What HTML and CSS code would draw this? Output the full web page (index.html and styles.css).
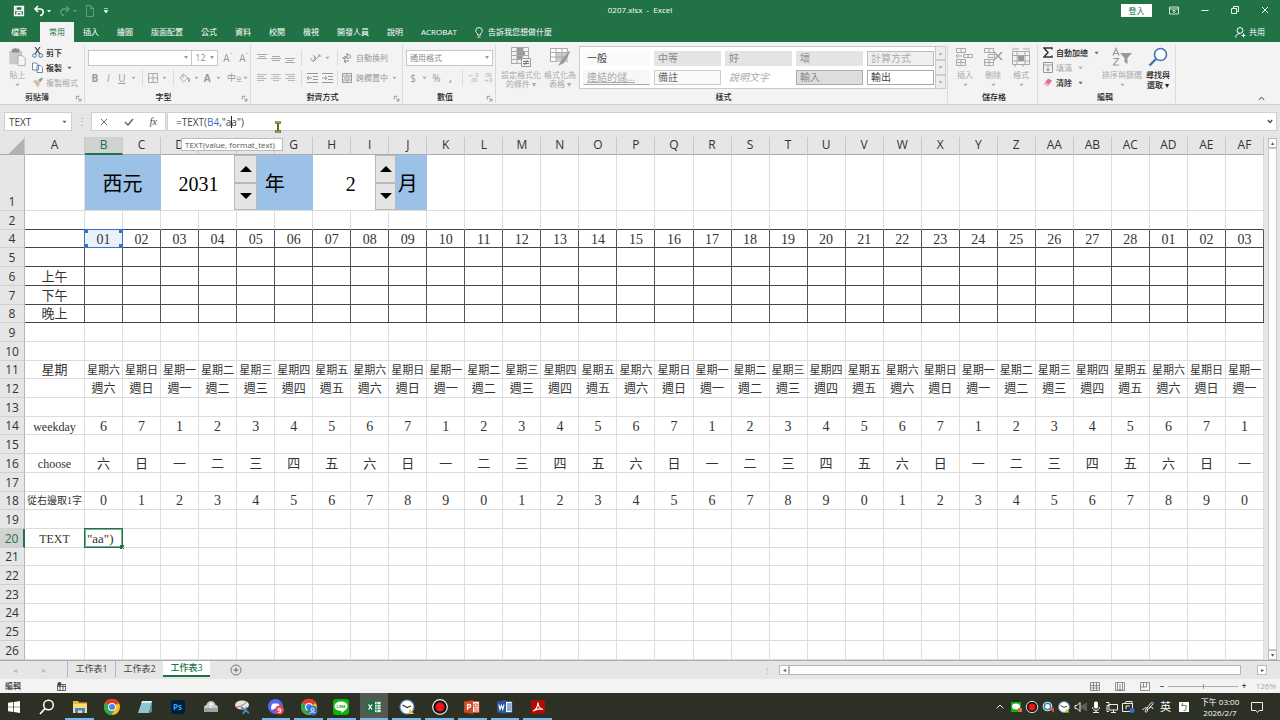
FILE: index.html
```html
<!DOCTYPE html>
<html lang="zh-Hant">
<head>
<meta charset="utf-8">
<title>0207.xlsx - Excel</title>
<link rel="stylesheet" href="styles.css">
</head>
<body>
<svg class="sprite" aria-hidden="true">
  <symbol id="caret" viewBox="0 0 6 4"><path d="M0.5 0.5h5L3 3.5z" fill="currentColor"/></symbol>
  <symbol id="launcher" viewBox="0 0 8 8"><path d="M1.500 5V1.500H5M3.500 3.500l3 3M6.800 4v2.800H4" fill="none" stroke="currentColor"/></symbol>
  <symbol id="chrome" viewBox="0 0 18 18"><circle cx="9" cy="9" r="8" fill="#fbc116"/><path d="M9 9 2 5A8 8 0 0 1 16 5z" fill="#e33b2e"/><path d="M9 9 2 5a8 8 0 0 0 6.500 12L12.500 11z" fill="#2da94f"/><circle cx="9" cy="9" r="4" fill="#fff"/><circle cx="9" cy="9" r="3" fill="#4285f4"/></symbol>
  <symbol id="record" viewBox="0 0 18 18"><circle cx="9" cy="9" r="7.300" fill="#111" stroke="#eee" stroke-width="1.200"/><circle cx="9" cy="9" r="4.500" fill="#f01414"/></symbol>
  <symbol id="clock" viewBox="0 0 18 18"><circle cx="9" cy="9" r="7" fill="#fff" stroke="#6b8fc0" stroke-width="1.200"/><path d="M4.500 7 9 9.500 13 8" fill="none" stroke="#333" stroke-width="1.200"/><path d="M12 11l4 5h-6z" fill="#e8c34a"/></symbol>
</svg>

<header class="titlebar">
  <div class="quick">
    <button aria-label="儲存"><svg width="12" height="12" viewBox="0 0 12 12"><path d="M1.500 1.500h9v9h-9zM3 1.500v4h6v-4M4 10.500v-3h4v3" fill="none" stroke="#fff" stroke-width="1.300"/></svg></button>
    <button aria-label="復原"><svg width="18" height="12" viewBox="0 0 18 12"><path d="M5 1 2 4l3 3M2 4h5a3.200 3.200 0 0 1 0 6.500" fill="none" stroke="#fff" stroke-width="1.600"/><path d="M14 5h4l-2 2.500z" fill="#fff"/></svg></button>
    <button aria-label="重做" class="dim"><svg width="18" height="12" viewBox="0 0 18 12"><path d="M7 1l3 3-3 3M10 4H5a3.200 3.200 0 0 0 0 6.500" fill="none" stroke="#fff" stroke-width="1.300"/><path d="M14 5h4l-2 2.500z" fill="#fff"/></svg></button>
    <button aria-label="新增" class="dim"><svg width="10" height="12" viewBox="0 0 10 12"><path d="M1.500 .5h4l3 3v8h-7zM5.500 .5v3h3" fill="none" stroke="#fff"/></svg></button>
    <button aria-label="自訂快速存取工具列"><svg width="6" height="6" viewBox="0 0 6 6"><path d="M1 0.500h4M1 2.500h4L3 5z" fill="#fff" stroke="#fff" stroke-width=".6"/></svg></button>
  </div>
  <h1 class="doc-title">0207.xlsx &nbsp;- &nbsp;Excel</h1>
  <div class="window-tools">
    <button class="signin">登入</button>
    <button aria-label="功能區顯示選項"><svg width="10" height="9" viewBox="0 0 10 9"><path d="M.5 1h9v7h-9zM.5 3h9M5 7V4M3.500 5.500 5 4l1.500 1.500" fill="none" stroke="#fff" stroke-width=".8"/></svg></button>
    <button aria-label="最小化"><svg width="8" height="8" viewBox="0 0 8 8"><path d="M.5 4.500h7" stroke="#fff"/></svg></button>
    <button aria-label="還原"><svg width="8" height="8" viewBox="0 0 8 8"><path d="M.5 2.500h5v5h-5zM2.500 2V.5h5v5H6" fill="none" stroke="#fff" stroke-width=".9"/></svg></button>
    <button aria-label="關閉"><svg width="8" height="8" viewBox="0 0 8 8"><path d="M1 1l6 6M7 1 1 7" stroke="#fff"/></svg></button>
  </div>
</header>

<nav class="ribbon-tabs">
  <button class="file">檔案</button><button class="active">常用</button><button>插入</button><button>繪圖</button><button>版面配置</button><button>公式</button><button>資料</button><button>校閱</button><button>檢視</button><button>開發人員</button><button>說明</button><button>ACROBAT</button>
  <button class="tell"><svg width="8" height="11" viewBox="0 0 8 11"><path d="M2.500 8V6.500C1 5.500.7 4.500.7 3.800a3.300 3.300 0 0 1 6.600 0c0 .7-.3 1.700-1.800 2.700V8zM2.500 10h3" fill="none" stroke="#fff" stroke-width=".9"/></svg>告訴我您想做什麼</button>
  <button class="share"><svg width="11" height="11" viewBox="0 0 11 11"><circle cx="5" cy="3.500" r="2.900" fill="none" stroke="#fff"/><path d="M.7 10.500c0-2.500 2-4 4.300-4M8.500 6.500v4M6.500 8.500h4" fill="none" stroke="#fff"/></svg>共用</button>
</nav>

<section class="ribbon" aria-label="常用">
  <div class="group g-clip">
    <div class="tools">
      <button class="big dim"><svg width="19" height="20" viewBox="0 0 20 22"><path d="M1 4h14v15H1z" fill="#c9c9c9"/><path d="M4 2h3l1-1.500L9 2h3v4H4z" fill="#8d8d8d"/><path d="M10.500 9.500h5l3 3v8h-8z" fill="#f5f5f5" stroke="#aaa"/></svg><span>貼上</span><svg class="caret"><use href="#caret"/></svg></button>
      <div class="stack">
        <button><svg width="12" height="11" viewBox="0 0 12 11"><path d="M3 0l5 7M8 0 3 7" stroke="#444" stroke-width="1.200"/><circle cx="2.500" cy="8.500" r="1.800" fill="none" stroke="#4a78a8"/><circle cx="8.800" cy="8.500" r="1.800" fill="none" stroke="#4a78a8"/></svg>剪下</button>
        <button><svg width="12" height="11" viewBox="0 0 12 11"><path d="M.5 1h4l2 2v5h-6zM5 3.500h3.500l2 2v5H5z" fill="#fff" stroke="#6c8aa8"/></svg>複製<svg class="caret"><use href="#caret"/></svg></button>
        <button class="dim"><svg width="12" height="11" viewBox="0 0 12 11"><path d="M6 3 9.500.5 11 2 8 5.500z" fill="#999"/><path d="M1 4l3-1 4 3-2 4.500z" fill="#d9b99b"/></svg>複製格式</button>
      </div>
    </div>
    <footer>剪貼簿<svg class="launcher"><use href="#launcher"/></svg></footer>
  </div>

  <div class="group g-font">
    <div class="lines">
      <div class="line">
        <select class="face" aria-label="字型"><option></option></select><select class="size" aria-label="字型大小"><option>12</option></select>
        <button class="grow" aria-label="放大字型">A<sup>ˆ</sup></button><button class="grow" aria-label="縮小字型">A<sup>ˇ</sup></button>
      </div>
      <div class="line letters">
        <button><b>B</b></button><button><i>I</i></button><button><u>U</u></button><svg class="caret"><use href="#caret"/></svg><hr>
        <button aria-label="框線"><svg width="10" height="10" viewBox="0 0 10 10"><path d="M.5.5h9v9h-9zM5 0v10M0 5h10" fill="none" stroke="#aaa"/></svg></button><svg class="caret"><use href="#caret"/></svg><hr>
        <button aria-label="填滿色彩"><svg width="11" height="10" viewBox="0 0 11 10"><path d="M4 1 9 5 4.500 9 1 5zM4 1v4" fill="none" stroke="#aaa"/><path d="M10 5v4" stroke="#999" stroke-width="1.500"/></svg></button><svg class="caret"><use href="#caret"/></svg>
        <button><b>A</b></button><svg class="caret"><use href="#caret"/></svg><button class="phon">中<small>ㄓ</small></button><svg class="caret"><use href="#caret"/></svg>
      </div>
    </div>
    <footer>字型<svg class="launcher"><use href="#launcher"/></svg></footer>
  </div>

  <div class="group g-align">
    <div class="lines">
      <div class="line">
        <button aria-label="靠上"><svg width="10" height="10"><path d="M0 1.500h10M2 3.500h6M0 5.500h10" stroke="#aaa"/></svg></button><button aria-label="置中"><svg width="10" height="10"><path d="M1 3.500h8M0 5.500h10M1 7.500h8" stroke="#aaa"/></svg></button><button aria-label="靠下"><svg width="10" height="10"><path d="M0 5.500h10M2 7.500h6M0 9.500h10" stroke="#aaa"/></svg></button><hr>
        <button class="mid" aria-label="方向"><svg width="11" height="10" viewBox="0 0 11 10"><path d="M1 5a2 2 0 1 0 3-1M3 2l4 4M3 9l7-7M8 2h2v2" fill="none" stroke="#999"/></svg><svg class="caret"><use href="#caret"/></svg></button><hr>
        <button class="wide"><svg width="10" height="11" viewBox="0 0 10 11"><path d="M1 4a1.500 1.500 0 1 0 2-1v3M5 0v5a2 2 0 1 0 0-3M2 8h5M4 7 2 8.500 4 10" fill="none" stroke="#888"/></svg>自動換列</button>
      </div>
      <div class="line">
        <button aria-label="靠左"><svg width="10" height="10"><path d="M0 1.500h10M0 3.500h7M0 5.500h10M0 7.500h7" stroke="#bbb"/></svg></button><button aria-label="水平置中"><svg width="10" height="10"><path d="M0 1.500h10M2 3.500h6M0 5.500h10M2 7.500h6" stroke="#bbb"/></svg></button><button aria-label="靠右"><svg width="10" height="10"><path d="M0 1.500h10M3 3.500h7M0 5.500h10M3 7.500h7" stroke="#bbb"/></svg></button><hr>
        <button class="mid" aria-label="縮排"><svg width="26" height="10" viewBox="0 0 26 10"><path d="M0 .5h11M6 3.500h5M6 6.500h5M0 9.500h11M0 5h5M2 3 0 5l2 2M15 .5h11M21 3.500h5M21 6.500h5M15 9.500h11M15 5h5M18 3l2 2-2 2" fill="none" stroke="#999"/></svg></button><hr>
        <button class="wide"><svg width="10" height="10" viewBox="0 0 10 10"><path d="M.5.5h9v9h-9zM0 3h10M0 7h10M5 0v3M5 7v3M2 5h6" fill="none" stroke="#999"/></svg>跨欄置中<svg class="caret"><use href="#caret"/></svg></button>
      </div>
    </div>
    <footer>對齊方式<svg class="launcher"><use href="#launcher"/></svg></footer>
  </div>

  <div class="group g-num">
    <div class="lines">
      <div class="line"><select class="format" aria-label="數值格式"><option>通用格式</option></select></div>
      <div class="line letters"><button>$</button><svg class="caret"><use href="#caret"/></svg><button>%</button><button><b>,</b></button><hr>
      <button class="dec">←.0<br>.00</button><button class="dec">.00<br>→.0</button></div>
    </div>
    <footer>數值<svg class="launcher"><use href="#launcher"/></svg></footer>
  </div>

  <div class="group g-style">
    <div class="tools">
      <button class="big dim"><svg width="20" height="20" viewBox="0 0 20 20"><path d="M.5.500h17v16H.5zM.5 4.500h17M.5 8.500h17M.5 12.500h17M6 0v16M12 0v16" fill="none" stroke="#aaa"/><path d="M6 1h6v3H6zM6 5h8v3H6zM6 9h5v3H6z" fill="#999"/><path d="M10.500 11.500h9v8h-9z" fill="#f5f5f5" stroke="#999"/><path d="M12 14.500h6M12 16.500h6M16.500 13l-3 5" stroke="#777"/></svg><span>設定格式化<br>的條件 ▾</span></button>
      <button class="big dim"><svg width="20" height="20" viewBox="0 0 20 20"><path d="M.5 1.500h17v13H.5z" fill="#fff" stroke="#aaa"/><path d="M6 5h12v10H6z" fill="#ccc"/><path d="M.5 5.500h17M.5 10h17M6 2v13M12 2v13" stroke="#aaa"/><path d="M19 4l-8 10-3 5 6-3 6-11z" fill="#999"/></svg><span>格式化為<br>表格 ▾</span></button>
      <div class="gallery">
        <button class="plain">一般</button><button class="grey">中等</button><button class="grey">好</button><button class="grey">壞</button><button class="box">計算方式</button>
        <button class="link">連結的儲...</button><button class="note">備註</button><button class="ital">說明文字</button><button class="input">輸入</button><button class="output">輸出</button>
      </div>
      <div class="gscroll"><button aria-label="上一列">▴</button><button aria-label="下一列">▾</button><button aria-label="其他">▾</button></div>
    </div>
    <footer>樣式</footer>
  </div>

  <div class="group g-cells">
    <div class="tools">
      <button class="big dim"><svg width="20" height="20" viewBox="0 0 20 20"><path d="M1.500 1.500h9v4h-9zM6 1v4M1.500 12.500h9v6h-9zM6 12v6M1.500 15.500h9M8.500 7.500h9v3h-9zM13 7v3M1 9h6M3.500 7 1 9l2.500 2" fill="none" stroke="#aaa"/></svg><span>插入</span><svg class="caret"><use href="#caret"/></svg></button>
      <button class="big dim"><svg width="20" height="20" viewBox="0 0 20 20"><path d="M1.500 1.500h9v4h-9zM6 1v4M1.500 12.500h9v6h-9zM6 12v6M1.500 15.500h9M5.500 7.500h6v3h-6z" fill="none" stroke="#aaa"/><path d="M11 5l8 8M19 5l-8 8" stroke="#999" stroke-width="1.400"/></svg><span>刪除</span><svg class="caret"><use href="#caret"/></svg></button>
      <button class="big dim"><svg width="20" height="20" viewBox="0 0 20 20"><path d="M1.500 4.500h17v13h-17zM1 8.500h18M1 14h18M6 4v14M14 4v14M2 .5v3M18 .5v3M3 2h5M12 2h5M4 20v-2M12 20v-2" fill="none" stroke="#aaa"/><path d="M7 9h6v5H7z" fill="#999"/></svg><span>格式</span><svg class="caret"><use href="#caret"/></svg></button>
    </div>
    <footer>儲存格</footer>
  </div>

  <div class="group g-edit">
    <div class="tools">
      <div class="stack">
        <button><svg width="10" height="11" viewBox="0 0 10 11"><path d="M9 2.500V1H1l4 4.500L1 10h8V8.500" fill="none" stroke="#333" stroke-width="1.500"/></svg>自動加總<svg class="caret"><use href="#caret"/></svg></button>
        <button class="dim"><svg width="10" height="11" viewBox="0 0 10 11"><path d="M.5.500h9v10h-9zM0 3h10M5 4v5M3 7l2 2 2-2" fill="none" stroke="#999"/></svg>填滿<svg class="caret"><use href="#caret"/></svg></button>
        <button><svg width="10" height="11" viewBox="0 0 10 11"><path d="M5 1.500 9 3.500 5 9 1 7z" fill="#e36c8c"/><path d="M1 7l1.500-2 3.500 2.500L5 9.500z" fill="#f3afc0"/></svg>清除<svg class="caret"><use href="#caret"/></svg></button>
      </div>
      <button class="big dim sort"><svg width="20" height="20" viewBox="0 0 20 20"><path d="M1 8.500 4 1.500l3 7M2 6.500h4M1.500 11.500h5l-5 6.500h5.500" fill="none" stroke="#999" stroke-width="1.200"/><path d="M8 6h12l-4.500 5v6l-3-2v-4z" fill="#999"/></svg><span>排序與篩選</span><svg class="caret"><use href="#caret"/></svg></button>
      <button class="big find"><svg width="20" height="20" viewBox="0 0 20 20"><circle cx="12.500" cy="7.500" r="6" fill="#fff" stroke="#3b76b5" stroke-width="1.600"/><path d="M8 12l-6.500 6.500" stroke="#3b76b5" stroke-width="2.400"/></svg><span>尋找與<br>選取 ▾</span></button>
    </div>
    <footer>編輯</footer>
  </div>
  <button class="collapse" aria-label="摺疊功能區"><svg width="7" height="5"><path d="M.8 4 3.500 1 6.200 4" fill="none" stroke="#444"/></svg></button>
</section>

<section class="formula-bar">
  <label class="namebox"><input aria-label="名稱方塊" value="TEXT"><svg class="caret"><use href="#caret"/></svg></label>
  <span class="grip">⋮</span>
  <div class="fx"><button aria-label="取消"><svg width="8" height="8"><path d="M1 1l6 6M7 1 1 7" stroke="#666"/></svg></button><button aria-label="輸入"><svg width="10" height="8"><path d="M1 4l3 3 5-6" fill="none" stroke="#666" stroke-width="1.500"/></svg></button><button class="fn" aria-label="插入函數">fx</button></div>
  <div class="formula" contenteditable="true" role="textbox" aria-label="資料編輯列">=TEXT(<span class="ref">B4</span>,"a<i class="bar"></i>a")</div>
  <button class="expand" aria-label="展開"><svg width="6" height="5"><path d="M.8 1 3 3.500 5.200 1" fill="none" stroke="#444" stroke-width="1.200"/></svg></button>
  <div class="hint">TEXT(value, format_text)</div>
  <svg class="ibeam" width="8" height="12" viewBox="0 0 8 12"><path d="M1 1.500h6M4 1.500v9M1 10.500h6" stroke="#3a3300" stroke-width="2"/><path d="M1.500 1.500h5M4 2v8M1.500 10.500h5" stroke="#c9b63c" stroke-width=".8"/></svg>
</section>

<main class="sheet-area">
  <table class="sheet" id="sheet"></table>
  <div class="vscroll"><button aria-label="向上捲動">▴</button><div class="vtrack"></div><button aria-label="向下捲動">▾</button></div>
</main>

<nav class="sheet-tabs">
  <div class="arrows"><button aria-label="上一張">◂</button><button aria-label="下一張">▸</button></div>
  <button class="tab">工作表1</button><button class="tab">工作表2</button><button class="tab current">工作表3</button>
  <button class="add" aria-label="新工作表"><svg width="12" height="12"><circle cx="6" cy="6" r="5" fill="none" stroke="#777"/><path d="M3.500 6h5M6 3.500v5" stroke="#666"/></svg></button>
  <span class="grip">⋮</span>
  <div class="hscroll"><button aria-label="向左捲動">◂</button><div class="thumb"></div><button aria-label="向右捲動">▸</button></div>
</nav>

<footer class="status">
  <b>編輯</b>
  <svg class="macro" width="9" height="9" viewBox="0 0 9 9"><path d="M.5 2.500h8v6h-8zM0 4.500h9M3 3v6M6 3v6" fill="none" stroke="#666"/><circle cx="2.500" cy="2" r="2" fill="#444"/></svg>
  <div class="views">
    <button aria-label="標準"><svg width="10" height="9"><path d="M.5.500h9v8h-9zM0 3.500h10M0 6h10M3.500 0v9M6.500 0v9" fill="none" stroke="#777" stroke-width=".8"/></svg></button>
    <button aria-label="整頁模式"><svg width="10" height="9"><path d="M.5.500h9v8h-9zM2.500 1v7h5V1M4 3h2M4 5h2M4 7h2" fill="none" stroke="#777" stroke-width=".8"/></svg></button>
    <button aria-label="分頁預覽"><svg width="10" height="9"><path d="M.5.500h9v8h-9zM3.500 0v5h3V0M1 5h3" fill="none" stroke="#777" stroke-width=".8"/></svg></button>
  </div>
  <div class="zoom"><button>−</button><input type="range" min="0" max="100" value="50" aria-label="縮放"><button>+</button><span>126%</span></div>
</footer>

<div class="taskbar">
  <div class="apps">
    <button aria-label="開始"><svg width="12" height="12" viewBox="0 0 12 12"><path d="M0 1.700 5.300 1v4.700H0zM6 .9 12 0v5.700H6zM0 6.300h5.300V11L0 10.300zM6 6.300h6V12l-6-.9z" fill="#fff"/></svg></button>
    <button aria-label="搜尋"><svg width="16" height="16" viewBox="0 0 16 16"><circle cx="9.500" cy="6" r="4.800" fill="none" stroke="#fff" stroke-width="1.500"/><path d="M6 9.500 1 15" stroke="#fff" stroke-width="1.800"/></svg></button>
    <button class="open" aria-label="檔案總管"><svg width="16" height="14" viewBox="0 0 16 14"><path d="M1 1h5l1 1.500h8V13H1z" fill="#e9b93f"/><path d="M1 4h14v9H1z" fill="#fbdc78"/><path d="M3 13V8h10v5h-3v-2.500H6V13z" fill="#3d8fcc"/></svg></button>
    <button aria-label="Chrome"><svg width="18" height="18"><use href="#chrome"/></svg></button>
    <button aria-label="記事本"><svg width="16" height="16" viewBox="0 0 16 16"><path d="M5 2h10l-3 12H1z" fill="#8fc7cf"/><path d="M5 2h10v2H4.500z" fill="#d9eef0"/><path d="M12 14 15 2v11z" fill="#5b8f98"/></svg></button>
    <button aria-label="Photoshop"><svg width="16" height="16" viewBox="0 0 16 16"><rect x="1" y="1" width="14" height="14" rx="3" fill="#001e36"/><text x="3" y="11" font-size="8" class="svg-label" fill="#31a8ff">Ps</text></svg></button>
    <button aria-label="雲端硬碟"><svg width="16" height="16" viewBox="0 0 16 16"><path d="M1 9c0-2 1-3 2.500-3C4 3 6 2 8 2s4 1 4.500 4C14 6 15 7 15 9z" fill="#c8cccc"/><path d="M1 9h14v4H1z" fill="#9da2a2"/><path d="M8 4v5M6 6l2-2 2 2" fill="none" stroke="#fff"/></svg></button>
    <button aria-label="剪取工具"><svg width="18" height="16" viewBox="0 0 18 16"><ellipse cx="8" cy="6" rx="7" ry="4.500" fill="#e8e4e2"/><path d="M2 8c4 0 8-2 11-6" stroke="#c95548" fill="none"/><path d="M7 8l8 6M13 8l-4 7" stroke="#4d8ab5" stroke-width="1.800"/></svg></button>
    <button class="open" aria-label="Discord"><svg width="18" height="18" viewBox="0 0 18 18"><circle cx="8.500" cy="8.500" r="7.500" fill="#5865f2"/><path d="M4 11c0-3 1-5 2-5.500h5c1 .5 2 2.500 2 5.500-2 2-2-.5-4.500-.5S6 13 4 11z" fill="#fff"/><circle cx="12.500" cy="12" r="4.500" fill="#e44"/><text x="10.500" y="15" font-size="7" class="svg-label" fill="#fff">9</text></svg></button>
    <button class="open" aria-label="Chrome 設定檔"><svg width="18" height="18" viewBox="0 0 18 18"><use href="#chrome"/><circle cx="12.500" cy="12.500" r="5" fill="#3672c5"/><circle cx="12.500" cy="11.500" r="1.600" fill="none" stroke="#fff"/><path d="M9.500 15.500c1-2 5-2 6 0" fill="none" stroke="#fff"/></svg></button>
    <button class="open" aria-label="LINE"><svg width="18" height="18" viewBox="0 0 18 18"><rect x="1" y="1" width="16" height="16" rx="3" fill="#09b509"/><path d="M9 3.500c4 0 6.500 2 6.500 4.800 0 2.500-3 4.700-6 6.700v-2C5 13 2.500 11 2.500 8.300S5 3.500 9 3.500z" fill="#fff"/><text x="4.500" y="10" font-size="4" class="svg-label" fill="#09a509">LINE</text></svg></button>
    <button class="open here" aria-label="Excel"><svg width="16" height="14" viewBox="0 0 16 14"><path d="M7 1.500h8v11H7z" fill="#e9f3ec" stroke="#1e7145" stroke-width=".7"/><path d="M11 2v10M8 4.500h7M8 7h7M8 9.500h7" stroke="#1e7145" stroke-width=".7"/><path d="M0 1.500 9 0v14l-9-1.500z" fill="#1e7145"/><path d="M2.500 4.500l3.500 5M6 4.500l-3.500 5" stroke="#fff" stroke-width="1.300"/></svg></button>
    <button class="open" aria-label="時鐘"><svg width="18" height="18"><use href="#clock"/></svg></button>
    <button class="open" aria-label="錄影"><svg width="18" height="18"><use href="#record"/></svg></button>
    <button class="open" aria-label="PowerPoint"><svg width="16" height="14" viewBox="0 0 16 14"><path d="M7 1.500h8v11H7z" fill="#fff" stroke="#d24726" stroke-width=".8"/><path d="M10 4h3v3h-3zM10 9h4M10 11h4" stroke="#d24726" fill="none"/><path d="M0 1.500 9 0v14l-9-1.500z" fill="#d24726"/><path d="M3.500 10V4.500h1.700a1.400 1.400 0 0 1 0 3H3.500" fill="none" stroke="#fff" stroke-width="1.300"/></svg></button>
    <button class="open" aria-label="Word"><svg width="16" height="14" viewBox="0 0 16 14"><path d="M7 1.500h8v11H7z" fill="#fff" stroke="#2b579a" stroke-width=".8"/><path d="M10 4h4M10 6h4M10 8h4M10 10h4" stroke="#2b579a"/><path d="M0 1.500 9 0v14l-9-1.500z" fill="#2b579a"/><path d="M1.800 4.500 3 9.500l1.400-4 1.400 4 1.200-5" fill="none" stroke="#fff" stroke-width="1.100"/></svg></button>
    <button class="open" aria-label="Acrobat"><svg width="16" height="16" viewBox="0 0 16 16"><rect x="1" y="1" width="14" height="14" rx="2" fill="#b30b00"/><path d="M3 12c3-1 5-5 5-8.500C8 7 10 10 13 10.500c-3-1.500-7 0-10 1.500z" fill="none" stroke="#fff" stroke-width="1.200"/></svg></button>
  </div>
  <div class="tray">
    <button aria-label="顯示隱藏的圖示"><svg width="14" height="14" viewBox="0 0 14 14"><path d="M3.500 8.500 7 5l3.500 3.500" fill="none" stroke="#eee"/></svg></button>
    <button aria-label="LINE"><svg width="14" height="14" viewBox="0 0 14 14"><path d="M2 2h10v10H2z" fill="#09b509"/><ellipse cx="7" cy="6.500" rx="4" ry="3" fill="#fff"/><path d="M9 8h4v4H9z" fill="#e8684a"/></svg></button>
    <button aria-label="錄影"><svg width="14" height="14"><use href="#record"/></svg></button>
    <button aria-label="通訊"><svg width="14" height="14" viewBox="0 0 14 14"><circle cx="6.500" cy="6.500" r="4.800" fill="#fff"/><circle cx="6.500" cy="6.500" r="3.200" fill="none" stroke="#2789ad" stroke-width="1.600"/><path d="M8 8h5v5z" fill="#e05050"/></svg></button>
    <button aria-label="時鐘"><svg width="14" height="14"><use href="#clock"/></svg></button>
    <button aria-label="音量"><svg width="14" height="14" viewBox="0 0 14 14"><path d="M2 5.500h2l3-3v9l-3-3H2z" fill="none" stroke="#eee"/><path d="M9 5v4M11 4v6M13 3v8" stroke="#888"/></svg></button>
    <button aria-label="麥克風"><svg width="14" height="14" viewBox="0 0 14 14"><rect x="5" y="1.500" width="4" height="7" rx="1.500" fill="#fff"/><path d="M3.500 7c0 4.500 7 4.500 7 0M7 10v2M4 12.500h6" fill="none" stroke="#eee"/></svg></button>
    <button aria-label="網路"><svg width="14" height="14" viewBox="0 0 14 14"><path d="M4 4.500h8.500v5.500H4zM6 12.500h5M8.500 10v2M1 2.500h3v3H2v6h2" fill="none" stroke="#eee"/></svg></button>
    <button aria-label="相機"><svg width="14" height="14" viewBox="0 0 14 14"><path d="M1.500 3.500h10v8h-10zM4 3l1-1.500h6V4M5 9V6h4" fill="none" stroke="#eee"/><circle cx="11" cy="10.500" r="2.500" fill="#2f73c2"/></svg></button>
    <button class="pen" aria-label="手寫筆"><svg width="14" height="14" viewBox="0 0 14 14"><path d="M1.500 10c2-3 5-3 5 0s-3 3-2 0L10 3c1-1.500 3 0 2 1L7 9.500M8 8c2-1 4-1 4 1" fill="none" stroke="#eee"/></svg></button>
    <button class="ime">英</button>
    <button class="bopomo">ㄅ</button>
    <button class="time"><span>下午 03:00</span><span>2026/2/7</span></button>
    <button class="notify" aria-label="通知"><svg width="14" height="14" viewBox="0 0 14 14"><path d="M1.500 2.500h11v8H9l-1.500 2-1.500-2H1.500z" fill="none" stroke="#eee"/></svg></button>
  </div>
</div>
<script src="sheet.js"></script>
</body>
</html>
```

FILE: styles.css
```css
* { box-sizing: border-box; }

html, body { height: 100%; }

body {
  margin: 0;
  display: flex;
  flex-direction: column;
  overflow: hidden;
  background: #e6e6e6;
  color: #333;
  font: 8px/12px "Open Sans", "Noto Sans CJK TC", sans-serif;
}

button, input, select {
  margin: 0;
  padding: 0;
  border: 0;
  border-radius: 0;
  background: none;
  color: inherit;
  font: inherit;
}

button { white-space: nowrap; }
svg { display: block; flex: none; }
.sprite { position: absolute; width: 0; height: 0; }
.caret { width: 5px; height: 4px; color: #666; }

/* Title bar */
.titlebar {
  flex: none;
  display: grid;
  grid-template-columns: 1fr auto 1fr;
  align-items: center;
  height: 22px;
  background: #217346;
  color: #fff;
}
.quick { display: flex; align-items: center; gap: 8px; padding-left: 13px; }
.quick .dim { opacity: .3; }
.doc-title { margin: 0; padding-bottom: 2px; font-size: 8px; font-weight: 400; }
.window-tools { display: flex; align-items: center; justify-content: flex-end; gap: 22px; padding: 0 11px 2px 0; }
.signin { width: 31px; height: 13px; margin-right: -5px; background: #fff; color: #217346; line-height: 13px; }

/* Ribbon tabs */
.ribbon-tabs {
  flex: none;
  display: flex;
  height: 20px;
  padding-left: 2px;
  background: #217346;
  color: #fff;
}
.ribbon-tabs button { padding: 0 9px; }
.ribbon-tabs .file { margin-right: 4px; }
.ribbon-tabs .active { background: #f3f3f3; color: #217346; }
.ribbon-tabs .tell, .ribbon-tabs .share { display: flex; align-items: center; gap: 5px; }
.ribbon-tabs .share { margin-left: auto; padding-right: 15px; gap: 3px; }

/* Ribbon */
.ribbon {
  flex: none;
  display: flex;
  height: 63px;
  border-bottom: 1px solid #d0d0d0;
  background: #f3f3f3;
}
.group {
  flex: none;
  display: flex;
  flex-direction: column;
  margin: 3px 0 1px;
  border-right: 1px solid #dadada;
}
.group footer {
  position: relative;
  height: 12px;
  padding-right: 8px;
  color: #222;
  text-align: center;
  font-weight: 500;
}
.g-style footer, .g-cells footer { padding-right: 0; }
.launcher { position: absolute; right: 2px; bottom: 1px; width: 7px; height: 7px; color: #888; }
.tools { flex: 1; display: flex; align-items: flex-start; }
.big {
  display: flex;
  flex-direction: column;
  align-items: center;
  line-height: 10px;
  padding-top: 2px;
}
.big span { margin-top: 3px; }
.big .caret { margin-top: 3px; }
.dim, .dim .caret { color: #aaa; }
.stack { display: flex; flex-direction: column; font-weight: 500; }
.stack button { display: flex; align-items: center; gap: 3px; height: 15px; color: #222; }
.stack .caret { margin-left: 3px; }
.stack .dim { color: #aaa; font-weight: 400; }
.lines { flex: 1; padding-top: 3px; }
.line { display: flex; align-items: center; height: 20px; color: #999; }
.line select {
  height: 16px;
  padding: 0 3px;
  border: 1px solid #c6c6c6;
  background: #fff url("data:image/svg+xml,%3Csvg xmlns='http://www.w3.org/2000/svg' width='5' height='4'%3E%3Cpath d='M0 0h4L2 3z' fill='%23999'/%3E%3C/svg%3E") no-repeat right 2px center;
  appearance: none;
  color: #888;
  opacity: 1;
}
.line hr { width: 1px; height: 16px; margin: 0 4px; border: 0; background: #dcdcdc; }
.line .caret { color: #aaa; }
.letters { font-size: 10px; }

.g-clip { width: 85px; padding-left: 8px; }
.g-clip .stack { margin-left: 5px; }
.g-clip .stack button { gap: 2px; }
.g-clip footer { margin-left: -8px; padding-right: 10px; }
.g-font { width: 166px; }
.g-font .line { padding-left: 3px; }
.face { width: 105px; }
.line .size { width: 27px; margin-left: -1px; font-size: 9px; }
.grow { width: 12px; margin-left: 4px; font-size: 10px; line-height: 12px; }
.grow sup { font-size: 8px; line-height: 0; }
.g-font .letters button { width: 14px; }
.g-font .letters .phon { font-size: 9px; margin-left: 4px; }
.phon small { font-size: 6px; }
.letters svg { margin: 0 auto; }
.letters .caret { margin: 0 2px; }

.g-align { width: 152px; }
.g-align .line { padding-left: 4px; }
.g-align .line button { display: flex; align-items: center; justify-content: center; gap: 4px; width: 14px; }
.g-align .line .mid { width: 27px; }
.g-align .line .wide { width: auto; }

.g-num { width: 93px; }
.g-num .line { padding-left: 3px; }
.format { width: 87px; }
.g-num .letters button { width: 15px; }
.g-num .letters .dec { font-size: 5px; line-height: 5px; }

.g-style { width: 452px; padding-left: 4px; }
.g-style .big { width: 42px; }
.g-style .big span { line-height: 9px; }
.g-style .big + .big { width: 36px; }
.gallery {
  display: grid;
  grid-template-columns: repeat(5, 67px);
  grid-template-rows: 15px 15px;
  gap: 4px;
  margin: 1px 0 0 1px;
  padding: 4px 1px 3px 3px;
  border: 1px solid #c9c9c9;
  background: #fff;
  color: #888;
  font-size: 10px;
  line-height: 13px;
}
.gallery button { padding-left: 3px; text-align: left; border: 1px solid transparent; }
.gallery .plain { color: #444; background: #fafafa; }
.gallery .grey { background: #e4e4e4; }
.gallery .box { background: #f1efef; border-color: #bbb; color: #aaa; }
.gallery .link { border-bottom: 1px solid #aaa; background: #f7f7f7; color: #aaa; text-decoration: underline; }
.gallery .note { border-color: #ccc; background: #fafafa; color: #666; }
.gallery .ital { font-style: italic; color: #aaa; }
.gallery .input { border-color: #aaa; background: #ddd; }
.gallery .output { border-color: #aaa; color: #444; }
.gscroll { display: flex; flex-direction: column; width: 10px; height: 43px; margin-top: 1px; }
.gscroll button { flex: 1; border: 1px solid #ccc; border-left: 0; background: #eee; color: #aaa; font-size: 6px; line-height: 6px; }

.g-cells { width: 90px; padding-left: 3px; }
.g-cells .big { width: 28px; }
.g-edit { width: 138px; padding-left: 5px; }
.g-edit .stack { width: 58px; }
.g-edit .stack .caret { margin-left: 3px; }
.g-edit .sort { width: 42px; }
.g-edit .find { width: 30px; color: #222; font-weight: 500; }
.collapse { align-self: flex-end; margin: 0 15px 3px auto; }

/* Formula bar */
.formula-bar {
  position: relative;
  z-index: 2;
  flex: none;
  display: flex;
  height: 32px;
  padding: 7px 3px 6px 4px;
  font-size: 10px;
}
.namebox, .fx, .formula, .expand { border: 1px solid #cfcfcf; background: #fff; }
.namebox { display: flex; align-items: center; width: 68px; padding: 0 4px; }
.namebox input { flex: 1; min-width: 0; outline: 0; color: #444; }
.formula-bar .grip { width: 19px; line-height: 18px; text-align: center; color: #999; }
.fx { display: flex; align-items: center; justify-content: space-around; width: 75px; margin-right: 1px; }
.fn { font: italic 10px "Liberation Serif", serif; color: #444; }
.formula { flex: 1; padding-left: 8px; border-right: 0; line-height: 18px; color: #444; outline: 0; }
.expand { border-left: 0; padding-right: 3px; }
.ref { color: #3f6fbf; }
.bar { display: inline-block; width: 1px; height: 12px; margin-right: -1px; background: #222; vertical-align: -2px; }
.hint {
  position: absolute;
  left: 181px;
  top: 33px;
  height: 13px;
  padding: 0 7px 0 3px;
  border: 1px solid #bbb;
  background: #fff;
  color: #555;
  font-size: 8px;
  line-height: 11px;
}
.ibeam { position: absolute; left: 274px; top: 16px; }

/* Worksheet */
.sheet-area { flex: 1; min-height: 0; display: flex; }
.sheet {
  flex: 1;
  height: 100%;
  table-layout: fixed;
  border-collapse: separate;
  border-spacing: 0;
  background: #fff;
  color: #333;
}
.rowhead-col { width: 25px; }
.label-col { width: 60px; }
.sheet th, .sheet td { padding: 0; text-align: center; white-space: nowrap; }
.sheet th { border-right: 1px solid #c8c8c8; background: #e6e6e6; color: #333; font-size: 12px; font-weight: 400; line-height: 16px; }
.sheet thead th { height: 18px; border-bottom: 1px solid #ababab; line-height: 15px; vertical-align: top; }
.sheet tbody th { border-bottom: 1px solid #d0d0d0; border-right-color: #b5b5b5; vertical-align: bottom; }
.sheet td {
  position: relative;
  padding-top: 2px;
  border-right: 1px solid #dedede;
  border-bottom: 1px solid #dcdcdc;
  font: 400 14px/14px "Liberation Serif", "Noto Sans CJK TC", serif;
}
.sheet thead .chosen { background: #d2d2d2; border-bottom: 2px solid #217346; color: #217346; }
.sheet tbody .chosen { background: #d2d2d2; border-right: 2px solid #217346; color: #217346; }
.sheet .corner { background: linear-gradient(135deg, #e6e6e6 62%, #b2b2b2 62%); }
.sheet .r1 th, .sheet .r1 td { height: 56px; }
.sheet .r1 td { padding-top: 3px; font-size: 20px; line-height: 24px; color: #000; }
.sheet .r1 .blue { background: #9bc2e6; border-right-color: #9bc2e6; }
.sheet .r1 .bare { border-right-color: #fff; }
.sheet .r2 td { border-bottom-color: #444; }
.sheet .ruled td { border-right-color: #555; border-bottom-color: #444; }
.sheet .label { font-size: 12px; }
.sheet .label.han { font-size: 13px; }
.sheet .label.small { font-size: 10px; }
.sheet .r11 td { font-size: 11px; }
.sheet .r11 .label { font-size: 13px; }
.sheet .r12 td { font-size: 12px; }
.sheet .r16 td + td { font-size: 13px; }
.spinner {
  position: absolute;
  z-index: 1;
  top: 0;
  right: -21px;
  bottom: 0;
  display: flex;
  flex-direction: column;
  width: 23px;
}
.spinner.narrow { right: -8px; width: 21px; }
.spinner button { flex: 1; display: flex; align-items: center; justify-content: center; border: 1px solid #b9b9b9; background: #e4e4e4; }
.picked::after {
  content: "";
  position: absolute;
  inset: -1px;
  border: 1px solid #3d6fc4;
  background:
    linear-gradient(#3d6fc4, #3d6fc4) 0 0 / 3px 3px no-repeat,
    linear-gradient(#3d6fc4, #3d6fc4) 100% 0 / 3px 3px no-repeat,
    linear-gradient(#3d6fc4, #3d6fc4) 0 100% / 3px 3px no-repeat,
    linear-gradient(#3d6fc4, #3d6fc4) 100% 100% / 3px 3px no-repeat;
}
.sheet .picked { background: #e9f2fa; }
.sheet .editing { padding-left: 2px; text-align: left; font-size: 13px; }
.editing::before { content: ""; position: absolute; inset: -1px; border: 1px solid #217346; outline: 1px solid #7fae94; outline-offset: -2px; }
.editing::after { content: ""; position: absolute; right: -2px; bottom: -2px; width: 4px; height: 4px; background: #217346; }

.vscroll { display: flex; flex-direction: column; width: 13px; margin-left: 3px; padding: 1px 3px 0 1px; }
.vscroll button, .hscroll button { width: 10px; height: 10px; border: 1px solid #bbb; background: #fff; color: #555; font-size: 6px; line-height: 8px; }
.vscroll button { flex: none; width: 9px; }
.vtrack { flex: 1; width: 9px; border: 1px solid #c8c8c8; background: #fff; }

/* Sheet tabs */
.sheet-tabs {
  flex: none;
  display: flex;
  align-items: center;
  height: 19px;
  padding-right: 13px;
  border-top: 1px solid #ababab;
  background: #e6e6e6;
  color: #444;
}
.arrows { display: flex; justify-content: space-around; width: 58px; margin-right: 9px; color: #bbb; }
.tab { align-self: stretch; width: 48px; margin-bottom: 2px; border-left: 1px solid #b5b5b5; font-size: 9px; }
.tab.current { width: 47px; border: 0; border-bottom: 2px solid #217346; background: #fff; color: #217346; font-weight: 500; }
.add { margin-left: 20px; }
.sheet-tabs .grip { margin-left: auto; margin-right: 8px; color: #999; }
.hscroll { display: flex; width: 42%; max-width: 488px; }
.hscroll .thumb { flex: 1; height: 10px; margin-right: 16px; border: 1px solid #b5b5b5; background: #fff; }

/* Status bar */
.status {
  flex: none;
  display: flex;
  align-items: center;
  height: 14px;
  padding: 0 4px 0 5px;
  background: #f3f3f3;
}
.status b { font-weight: 500; }
.macro { margin-left: 36px; }
.views { display: flex; gap: 15px; margin-left: auto; }
.zoom { display: flex; align-items: center; gap: 3px; margin-left: 9px; color: #444; }
.zoom button { width: 6px; font-weight: 700; }
.zoom input { width: 70px; height: 8px; appearance: none; background: linear-gradient(#aaa, #aaa) center / 100% 1px no-repeat; }
.zoom input::-webkit-slider-thumb { appearance: none; width: 1px; height: 5px; background: #999; }
.zoom span { width: 24px; margin-left: 2px; text-align: right; color: #aaa; }

/* Taskbar */
.taskbar { flex: none; display: flex; justify-content: space-between; height: 27px; background: #2c3025; color: #fff; }
.apps { display: grid; grid-template-columns: repeat(17, 1fr); width: 556px; }
.apps button { display: flex; align-items: center; justify-content: center; margin-right: 4px; border: 0 solid transparent; border-width: 2px 0 2px; }
.apps .open { border-bottom-color: #76b9ed; }
.apps .here { background: #555a50; border-top-color: #555a50; }
.svg-label { font-family: "Open Sans", sans-serif; font-weight: 700; }
.tray { display: flex; align-items: center; gap: 2px; padding-right: 16px; }
.tray .pen { margin-left: 4px; }
.tray .ime { width: 17px; font-size: 11px; }
.bopomo { width: 10px; height: 10px; margin: 0 3px; background: #fff; color: #222; font-size: 8px; line-height: 10px; }
.time { display: flex; flex-direction: column; align-items: center; width: 52px; line-height: 11px; }
.notify { margin-left: 2px; }
```

FILE: sheet.js
```js
const columns = [..."ABCDEFGHIJKLMNOPQRSTUVWXYZ", "AA", "AB", "AC", "AD", "AE", "AF"];
const days = columns.slice(1).map((_, i) => i);
const pad = n => String(n).padStart(2, "0");
const han = ["六", "日", "一", "二", "三", "四", "五"];

const rows = {
  4: ["", i => pad(i % 28 + 1)],
  6: ["上午"],
  7: ["下午"],
  8: ["晚上"],
  11: ["星期", i => "星期" + han[i % 7]],
  12: ["", i => "週" + han[i % 7]],
  14: ["weekday", i => (i + 5) % 7 + 1],
  16: ["choose", i => han[i % 7]],
  18: ["從右邊取1字", i => i % 10],
  20: ["TEXT", i => i === 0 ? '"aa")' : ""]
};

const arrow = d => `<svg width="12" height="6"><path d="${d}" fill="#000"/></svg>`;
const spinner = (name, kind) => `<div class="spinner ${kind}">
  <button aria-label="${name}增加">${arrow("M0 6 6 0l6 6z")}</button>
  <button aria-label="${name}減少">${arrow("M0 0h12L6 6z")}</button></div>`;

const firstRow = `<td></td><td class="blue" colspan="2">西元</td>
  <td class="bare" colspan="2">2031${spinner("年", "")}</td>
  <td class="blue" colspan="2">年</td>
  <td class="bare" colspan="2">2${spinner("月", "narrow")}</td>
  <td class="blue">月</td>` + "<td></td>".repeat(22);

function labelCell(text) {
  let kind = "label";
  if (/^[^\x00-\x7f]+$/.test(text)) kind += " han";
  if (text.length > 5 && text.includes("1")) kind += " small";
  return `<td class="${kind}">${text}</td>`;
}

function bodyRow(n) {
  const head = `<th scope="row"${n === 20 ? ' class="chosen"' : ""}>${n}</th>`;
  if (n === 1) return `<tr class="r1">${head}${firstRow}</tr>`;
  const [label = "", value = () => ""] = rows[n] || [];
  const cells = days.map(i => {
    const kind = i === 0 && n === 4 ? "picked" : i === 0 && n === 20 ? "editing" : "";
    return `<td${kind ? ` class="${kind}"` : ""}>${value(i)}</td>`;
  }).join("");
  return `<tr class="r${n}${n >= 4 && n <= 8 ? " ruled" : ""}">${head}${labelCell(label)}${cells}</tr>`;
}

let body = "";
for (let n = 1; n <= 26; n++) if (n !== 3) body += bodyRow(n);

document.getElementById("sheet").innerHTML =
  `<colgroup><col class="rowhead-col"><col class="label-col"><col span="31"></colgroup>
  <thead><tr><th class="corner"></th>${columns.map(c =>
    `<th scope="col"${c === "B" ? ' class="chosen"' : ""}>${c}</th>`).join("")}</tr></thead>
  <tbody>${body}</tbody>`;
```
